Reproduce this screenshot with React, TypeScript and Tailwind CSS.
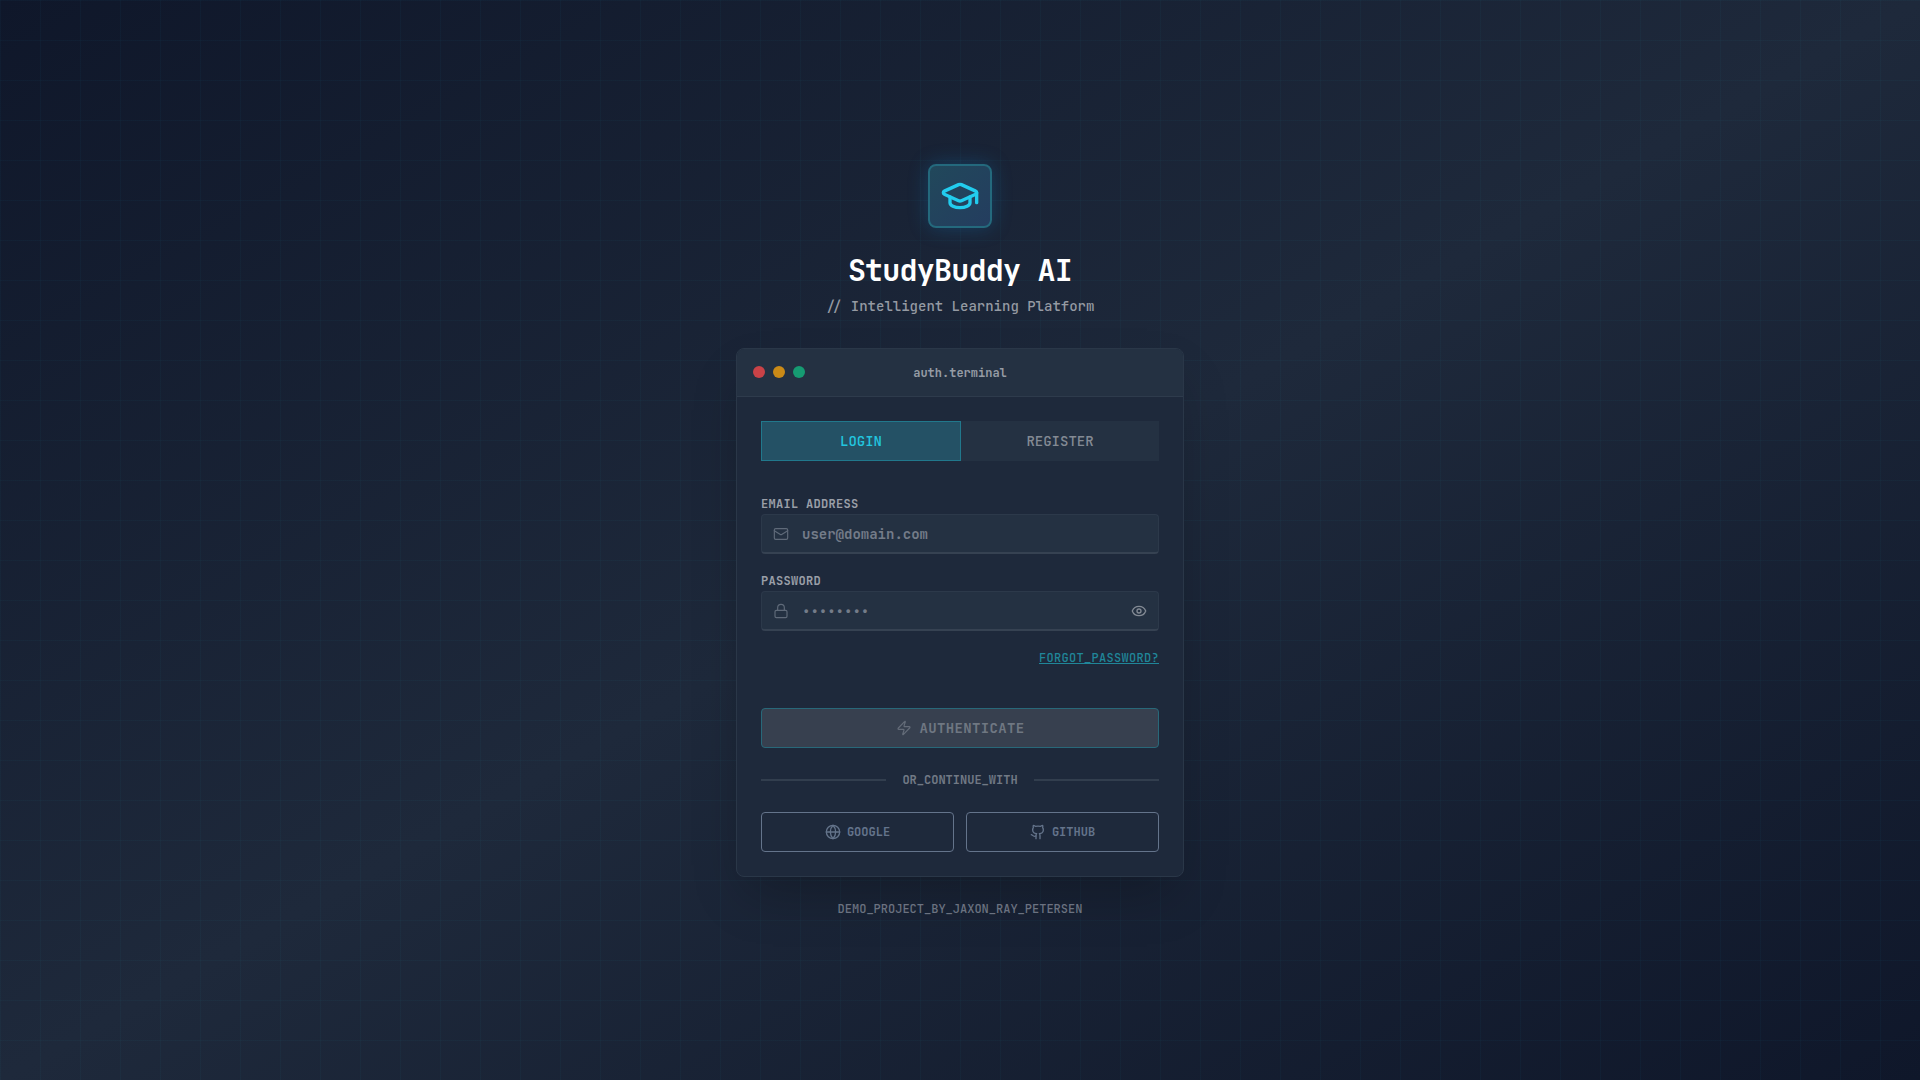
import type { ReactNode } from "react";
import { Eye, Github, Globe, GraduationCap, Lock, Mail, Zap } from "lucide-react";

function Field({
  label,
  placeholder,
  icon,
  trailing,
}: {
  label: string;
  placeholder: string;
  icon: ReactNode;
  trailing?: ReactNode;
}) {
  return (
    <div className="flex flex-col">
      <label className="h-[18px] text-xs leading-4 font-semibold tracking-[0.3px] text-[#9a9fa8]">{label}</label>
      <div className="flex h-10 items-center rounded border border-b-2 border-[#2c394a] border-b-[#364252] bg-[#243142] px-[11px] text-[#5f6a79]">
        {icon}
        <span className="ml-[13px] flex-1 text-sm font-semibold text-[#747c89]">{placeholder}</span>
        {trailing}
      </div>
    </div>
  );
}

export default function App() {
  return (
    <div className="relative flex h-[1080px] w-full flex-col items-center overflow-hidden bg-[linear-gradient(to_bottom_right,#0f172a_0%,#1e293b_50%,#0f172a_100%)] pt-[164px] font-['JetBrains_Mono','DejaVu_Sans_Mono',monospace]">
      <div className="pointer-events-none absolute inset-0 bg-[linear-gradient(rgba(34,211,238,0.03)_1px,transparent_1px),linear-gradient(90deg,rgba(34,211,238,0.03)_1px,transparent_1px)] bg-[size:40px_40px]" />
      <div className="relative flex w-[448px] flex-col items-center">
        <div className="flex size-16 items-center justify-center rounded-lg border-2 border-[#24697d] bg-[linear-gradient(135deg,#21485b,#243d5f)] shadow-[0_0_20px_rgba(20,130,200,0.3)]">
          <GraduationCap className="size-10 text-[#22ccee]" />
        </div>
        <h1 className="mt-6 text-[30px] leading-9 font-bold tracking-[-0.75px] text-white">StudyBuddy AI</h1>
        <p className="mt-2 text-sm leading-5 font-medium text-[#959aa3]">// Intelligent Learning Platform</p>

        <main className="mt-8 w-full overflow-hidden rounded-lg border border-[#2a3748] bg-[#1e293b] shadow-[0_25px_50px_-12px_rgba(0,0,0,0.25)]">
          <header className="grid h-12 grid-cols-3 items-center border-b border-[#2e3b4c] bg-[#243142] px-4">
            <div className="mb-px flex gap-2">
              <span className="size-3 rounded-full bg-[#c94247]" />
              <span className="size-3 rounded-full bg-[#ca8a17]" />
              <span className="size-3 rounded-full bg-[#169b72]" />
            </div>
            <span className="pt-px text-center text-xs font-semibold text-[#969ca5]">auth.terminal</span>
          </header>

          <div className="p-6">
            <div className="flex h-10 text-sm font-medium">
              <button className="w-[200px] border border-[#21788c] bg-[#245165] text-[#22c5df]">LOGIN</button>
              <button className="flex-1 bg-[#243142] text-[#838a94]">REGISTER</button>
            </div>

            <div className="mt-[35px] flex flex-col gap-[19px]">
              <Field label="EMAIL ADDRESS" placeholder="user@domain.com" icon={<Mail size={16} strokeWidth={1.75} />} />
              <Field
                label="PASSWORD"
                placeholder="••••••••"
                icon={<Lock size={16} strokeWidth={1.75} />}
                trailing={<Eye size={16} className="text-[#838a94]" />}
              />
            </div>

            <div className="mt-[17px] flex h-5 justify-end">
              <a className="text-xs leading-5 font-medium tracking-[0.3px] text-[#208699] underline">FORGOT_PASSWORD?</a>
            </div>

            <button className="mt-10 flex h-10 w-full items-center justify-center gap-2 rounded border border-[#286879] bg-[#37404f] text-sm font-bold tracking-[0.35px] text-[#6f7782]">
              <Zap size={16} strokeWidth={1.75} className="text-[#646c79]" />
              AUTHENTICATE
            </button>

            <div className="mt-6 flex h-4 items-center gap-4">
              <span className="h-0.5 flex-1 bg-[#323e4e]" />
              <span className="text-xs font-semibold text-[#717985]">OR_CONTINUE_WITH</span>
              <span className="h-0.5 flex-1 bg-[#323e4e]" />
            </div>

            <div className="mt-6 grid grid-cols-2 gap-3 text-xs font-bold text-[#64748b]">
              <button className="flex h-10 items-center justify-center gap-1.5 rounded border border-[#64748b]">
                <Globe size={16} />
                GOOGLE
              </button>
              <button className="flex h-10 items-center justify-center gap-1.5 rounded border border-[#64748b]">
                <Github size={16} />
                GITHUB
              </button>
            </div>
          </div>
        </main>

        <p className="mt-6 text-xs leading-4 font-medium text-[#6b7280]">DEMO_PROJECT_BY_JAXON_RAY_PETERSEN</p>
      </div>
    </div>
  );
}
